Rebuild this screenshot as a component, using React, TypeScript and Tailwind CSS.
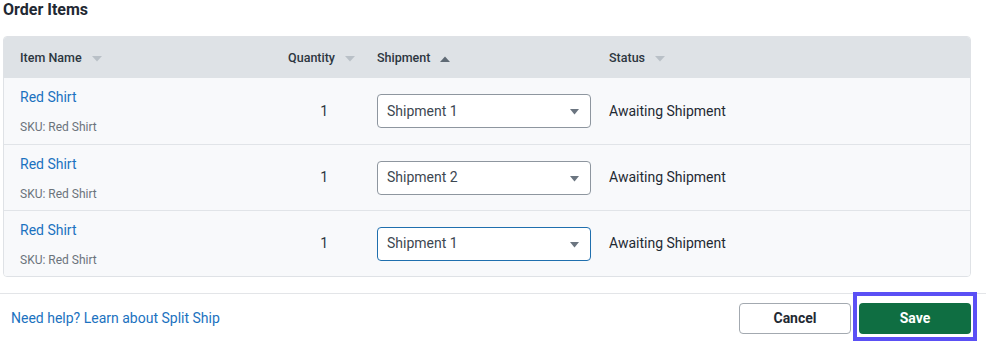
import { useState } from 'react';

const rows = [
  { name: 'Red Shirt', sku: 'Red Shirt', qty: 1, shipment: 'Shipment 1', status: 'Awaiting Shipment' },
  { name: 'Red Shirt', sku: 'Red Shirt', qty: 1, shipment: 'Shipment 2', status: 'Awaiting Shipment' },
  { name: 'Red Shirt', sku: 'Red Shirt', qty: 1, shipment: 'Shipment 1', status: 'Awaiting Shipment', focused: true },
];

function SortDown() {
  return (
    <svg width="10" height="6" viewBox="0 0 10 6" className="ml-[10px] shrink-0">
      <path d="M0 0h10L5 5.5z" fill="#b9c0c7" />
    </svg>
  );
}

function SortUp() {
  return (
    <svg width="10" height="6" viewBox="0 0 10 6" className="ml-[10px] shrink-0">
      <path d="M0 6h10L5 0.5z" fill="#5f6a75" />
    </svg>
  );
}

export default function App() {
  const [values, setValues] = useState(rows.map(r => r.shipment));

  return (
    <div className="w-[986px] h-[342px] bg-white font-['Roboto',sans-serif] overflow-hidden">
      {/* Order items */}
      <div className="pl-[3px] pr-[15px]">
        <h2 className="text-[16px] leading-[20px] font-bold text-[#1f2933]">Order Items</h2>

        <div className="mt-[16px] border border-[#dfe2e6] rounded-[4px] overflow-hidden">
          <div className="grid grid-cols-[266px_95px_232px_1fr] h-[41px] pt-[2px] bg-[#dee2e6] text-[12.5px] font-medium text-[#2c3640]">
            <div className="flex items-center pl-[16px]">Item Name<SortDown /></div>
            <div className="flex items-center justify-end pr-[10px]">Quantity<SortDown /></div>
            <div className="flex items-center pl-[12px]">Shipment<SortUp /></div>
            <div className="flex items-center pl-[12px]">Status<SortDown /></div>
          </div>

          {rows.map((r, i) => (
            <div
              key={i}
              className={`grid grid-cols-[266px_95px_232px_1fr] h-[66px] bg-[#f8f9fb] ${i > 0 ? 'border-t border-[#e1e4e8]' : ''}`}
            >
              <div className="flex flex-col pl-[16px] pt-[10px]">
                <a className="text-[14px] leading-[18px] text-[#1b72c0] cursor-pointer">{r.name}</a>
                <span className="mt-[14px] text-[12px] leading-[14px] text-[#6b737c]">SKU: {r.sku}</span>
              </div>
              <div className="flex items-center justify-end pr-[37px] text-[14px] text-[#2c3640]">{r.qty}</div>
              <div className="flex items-center pl-[12px]">
                <div
                  className={`relative w-[214px] h-[34px] rounded-[4px] bg-white border ${r.focused ? 'border-[#1f6fae]' : 'border-[#8e969f]'}`}
                >
                  <select
                    value={values[i]}
                    onChange={e => setValues(v => v.map((x, j) => (j === i ? e.target.value : x)))}
                    className="appearance-none w-full h-full bg-transparent pl-[9px] pr-[30px] text-[14px] text-[#3d4751] outline-none"
                  >
                    <option>Shipment 1</option>
                    <option>Shipment 2</option>
                  </select>
                  <svg width="9" height="6" viewBox="0 0 9 6" className="absolute right-[11px] top-[14px] pointer-events-none">
                    <path d="M0 0h9L4.5 5.5z" fill="#6b7580" />
                  </svg>
                </div>
              </div>
              <div className="flex items-center pl-[12px] text-[14px] text-[#1f2933]">{r.status}</div>
            </div>
          ))}
        </div>
      </div>

      {/* Footer */}
      <div className="mt-[16px] border-t border-[#e3e5e8] h-[50px] flex items-center justify-between pl-[11px] pr-[15px]">
        <a className="text-[14px] text-[#1b72c0] cursor-pointer">Need help? Learn about Split Ship</a>
        <div className="flex items-center gap-[8px]">
          <button className="w-[112px] h-[31px] rounded-[4px] border border-[#a3a9b0] bg-white text-[14px] font-bold text-[#1f2933]">
            Cancel
          </button>
          <button className="relative w-[112px] h-[31px] rounded-[4px] bg-[#0f6e42] text-[14px] font-bold text-white">
            Save
            <span className="absolute -left-[6px] -right-[6px] -top-[11px] -bottom-[7px] border-4 border-[#5b50f5] pointer-events-none" />
          </button>
        </div>
      </div>
    </div>
  );
}
